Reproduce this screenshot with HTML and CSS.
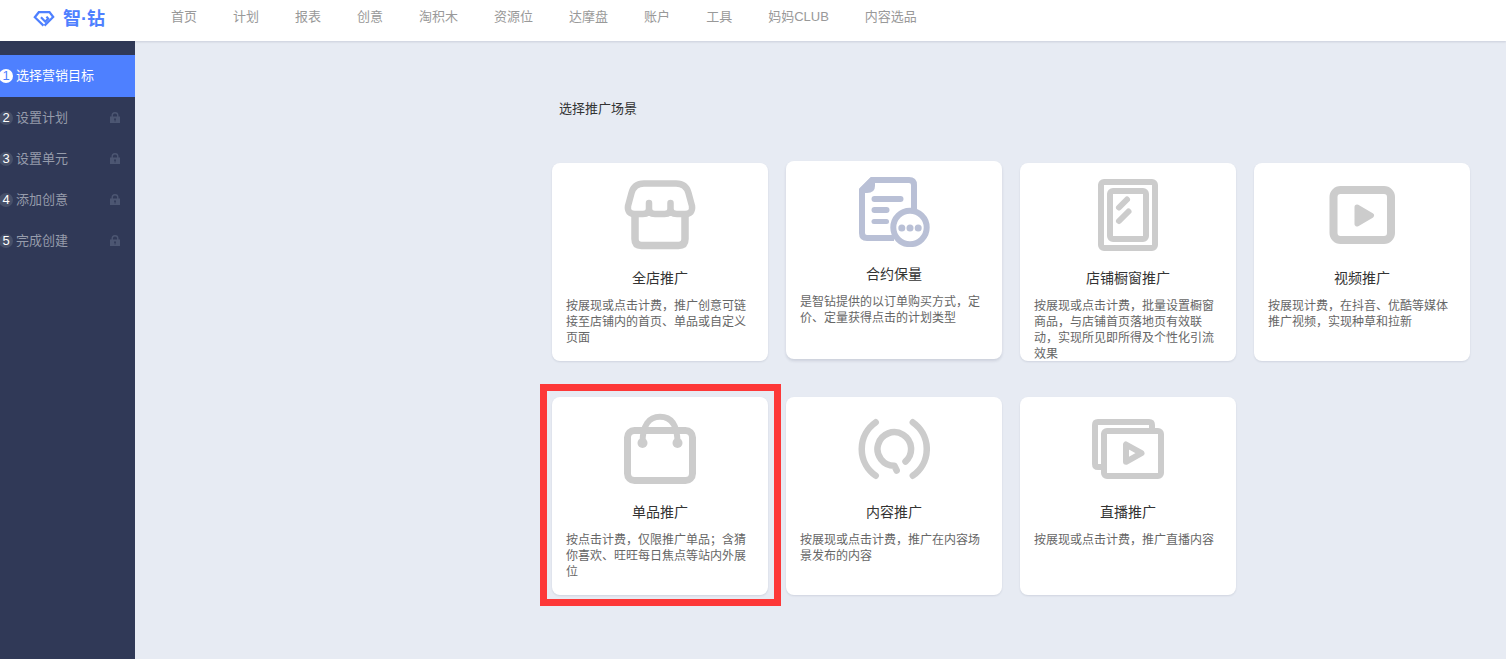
FILE: index.html
```html
<!DOCTYPE html>
<html lang="zh-CN">
<head>
<meta charset="utf-8">
<title>智·钻</title>
<link rel="stylesheet" href="styles.css">
</head>
<body>
<svg class="sprite" aria-hidden="true">
  <symbol id="lock" viewBox="0 0 10 11"><path d="M2.200 5V3.500a2.800 2.800 0 0 1 5.600 0V5" fill="none" stroke="currentColor" stroke-width="1.400"/><path fill-rule="evenodd" fill="currentColor" d="M0 4.600h10V11H0zM4 6.600v1.200h.6V9.400h.9V7.800H6V6.600z"/></symbol>
</svg>
<header class="header">
  <a class="logo" href="#">
    <svg class="logo-mark" viewBox="0 0 22 16" aria-hidden="true"><g fill="none" stroke="currentColor" stroke-width="2.200"><path d="M11.500 14.600L20.200 6 16.500 1.200H5.800L1.800 6.200L10.500 14.600"/><path d="M8 6.300L12.300 10.700 15.200 7.600 13.500 5.600"/></g></svg>
    <span>智·钻</span>
  </a>
  <nav class="nav">
    <a href="#">首页</a><a href="#">计划</a><a href="#">报表</a><a href="#">创意</a><a href="#">淘积木</a><a href="#">资源位</a><a href="#">达摩盘</a><a href="#">账户</a><a href="#">工具</a><a href="#">妈妈CLUB</a><a href="#">内容选品</a>
  </nav>
</header>
<div class="body">
  <aside class="sidebar">
    <a class="step active" href="#"><span class="num">1</span><span>选择营销目标</span></a>
    <a class="step" href="#"><span class="num">2</span><span>设置计划</span><svg class="lock"><use href="#lock"/></svg></a>
    <a class="step" href="#"><span class="num">3</span><span>设置单元</span><svg class="lock"><use href="#lock"/></svg></a>
    <a class="step" href="#"><span class="num">4</span><span>添加创意</span><svg class="lock"><use href="#lock"/></svg></a>
    <a class="step" href="#"><span class="num">5</span><span>完成创建</span><svg class="lock"><use href="#lock"/></svg></a>
  </aside>
  <main class="main">
    <section class="scenes">
      <h1 class="heading">选择推广场景</h1>
      <div class="cards">
        <button class="card" type="button">
          <svg class="icon" viewBox="0 0 72 72"><path d="M20 4.500H52Q62 4.500 64.500 14L68 27Q69 35 61 35H53Q46.500 35 46.500 29.500V24M46.500 29.500Q46.500 35 40.500 35H31Q25 35 25 29.500V24M25 29.500Q25 35 19 35H11Q3 35 4 27L7.500 14Q10 4.500 20 4.500" stroke-width="6.500"/><path d="M11 36V60Q11 66.500 17.500 66.500H54.500Q61 66.500 61 60V36" stroke-width="7.500"/></svg>
          <span class="title">全店推广</span>
          <span class="desc">按展现或点击计费，推广创意可链接至店铺内的首页、单品或自定义页面</span>
        </button>
        <button class="card lifted" type="button">
          <svg class="icon" viewBox="0 0 72 70"><path d="M56 32V8Q56 3 51 3H14L4 13V56Q4 61 9 61H36" stroke-linecap="butt"/><path class="solid" d="M1 12L13 0H17V9Q17 16 9 16H1z"/><path d="M16.500 22H42.500M16.500 33H28.500"/><path d="M16 44.500H28.500" stroke-width="5"/><circle cx="52" cy="50.500" r="16.700"/><g class="solid"><circle cx="43.800" cy="51" r="3.500"/><circle cx="52" cy="51" r="3.500"/><circle cx="60.200" cy="51" r="3.500"/></g></svg>
          <span class="title">合约保量</span>
          <span class="desc">是智钻提供的以订单购买方式，定价、定量获得点击的计划类型</span>
        </button>
        <button class="card" type="button">
          <svg class="icon" viewBox="0 0 72 72"><rect x="9" y="3" width="54" height="66" rx="3"/><rect x="18" y="12" width="36" height="48" rx="3"/><path d="M27 28.500L35 20.500M27 42L36.500 32.500"/></svg>
          <span class="title">店铺橱窗推广</span>
          <span class="desc">按展现或点击计费，批量设置橱窗商品，与店铺首页落地页有效联动，实现所见即所得及个性化引流效果</span>
        </button>
        <button class="card" type="button">
          <svg class="icon" viewBox="0 0 72 72"><rect x="7.500" y="11" width="57.500" height="50" rx="7" stroke-width="8"/><path class="play" d="M31 28L45.500 36.500 31 45z"/></svg>
          <span class="title">视频推广</span>
          <span class="desc">按展现计费，在抖音、优酷等媒体推广视频，实现种草和拉新</span>
        </button>
        <button class="card marked" type="button">
          <svg class="icon" viewBox="0 0 72 72"><rect x="3.500" y="17.500" width="65" height="50" rx="7" stroke-width="7"/><path d="M18.500 30C18.500 12 25 3.700 36 3.700S53.500 12 53.500 30"/><g class="solid"><circle cx="18.500" cy="30" r="5"/><circle cx="53.500" cy="30" r="5"/></g></svg>
          <span class="title">单品推广</span>
          <span class="desc">按点击计费，仅限推广单品；含猜你喜欢、旺旺每日焦点等站内外展位</span>
        </button>
        <button class="card" type="button">
          <svg class="icon" viewBox="0 0 72 72"><g stroke-width="6.500"><path d="M17.700 9.300A32.500 32.500 0 0 0 17.700 62.700M54.800 9.300A32.500 32.500 0 0 1 54.800 62.700M47.500 48.500A16.800 16.800 0 1 0 36.500 52.800L38.700 57.500"/></g></svg>
          <span class="title">内容推广</span>
          <span class="desc">按展现或点击计费，推广在内容场景发布的内容</span>
        </button>
        <button class="card" type="button">
          <svg class="icon" viewBox="0 0 72 72"><path d="M60 17V12Q60 9 57 9H6Q3 9 3 12V51Q3 54 6 54H10"/><rect x="12" y="18" width="57" height="45" rx="3"/><path d="M34 31.500V48.800L49.500 40.200z"/></svg>
          <span class="title">直播推广</span>
          <span class="desc">按展现或点击计费，推广直播内容</span>
        </button>
      </div>
    </section>
  </main>
</div>
</body>
</html>
```

FILE: styles.css
```css
* { box-sizing: border-box; }
body {
  margin: 0;
  min-height: 100vh;
  display: flex;
  flex-direction: column;
  background: #e7ebf3;
  color: #333;
  font: 13px/20px "Liberation Sans", "Noto Sans CJK SC", sans-serif;
}
a { color: inherit; text-decoration: none; }
.sprite { display: none; }

.header {
  height: 41px;
  padding: 0 33px 4px;
  display: flex;
  align-items: center;
  background: #fff;
  box-shadow: 0 1px 2px rgba(40, 50, 80, .15);
  z-index: 1;
}
.logo {
  width: 138px;
  display: flex;
  align-items: center;
  gap: 8px;
  color: #4e80ff;
  font-size: 18px;
  font-weight: 700;
}
.logo-mark { width: 22px; height: 16px; }
.nav {
  display: flex;
  gap: 36px;
  padding-bottom: 4px;
  color: #999;
  white-space: nowrap;
}

.body { flex: 1; display: flex; }
.sidebar {
  width: 135px;
  padding-top: 14px;
  background: #303957;
  color: #969cab;
}
.step { height: 41px; display: flex; align-items: center; padding-right: 15px; }
.step.active { height: 42px; background: #4e80ff; color: #fff; }
.num {
  width: 14px;
  height: 14px;
  margin: 0 3px 0 -1px;
  border-radius: 50%;
  background: #475069;
  color: #fff;
  line-height: 14px;
  text-align: center;
}
.active .num { background: #fff; color: #4e80ff; }
.lock { width: 10px; height: 11px; margin-left: auto; color: #4c5672; }

.main { flex: 1; padding: 58px 36px 40px; }
.scenes { max-width: 918px; margin-left: auto; }
.heading { margin: 0 0 44px 7px; font-size: 13px; font-weight: 400; line-height: 20px; }
.cards {
  display: grid;
  grid-template-columns: repeat(auto-fill, 216px);
  gap: 36px 18px;
}
.card {
  position: relative;
  min-height: 198px;
  padding: 16px 14px 0;
  display: flex;
  flex-direction: column;
  align-items: center;
  justify-content: flex-start;
  border: 0;
  border-radius: 8px;
  background: #fff;
  box-shadow: 0 1px 2px rgba(40, 50, 80, .12);
  color: #ccc;
  font: inherit;
  cursor: pointer;
}
.card.lifted {
  transform: translateY(-2px);
  box-shadow: 0 2px 3px rgba(40, 50, 80, .14);
  color: #b9c0d6;
}
.card.marked::after {
  content: "";
  position: absolute;
  inset: -13px -13px -11px -12px;
  border: 7px solid #fd3838;
}
.icon {
  width: 72px;
  flex: none;
  fill: none;
  stroke: currentColor;
  stroke-width: 6;
  stroke-linecap: round;
  stroke-linejoin: round;
}
.icon .solid { fill: currentColor; stroke: none; }
.icon .play { fill: currentColor; stroke-width: 5; }
.title { margin-top: 17px; color: #333; font-size: 14px; line-height: 20px; }
.desc {
  width: 100%;
  margin: 10px 0 -1px;
  color: #666;
  font-size: 12px;
  line-height: 16px;
  text-align: left;
}
```
